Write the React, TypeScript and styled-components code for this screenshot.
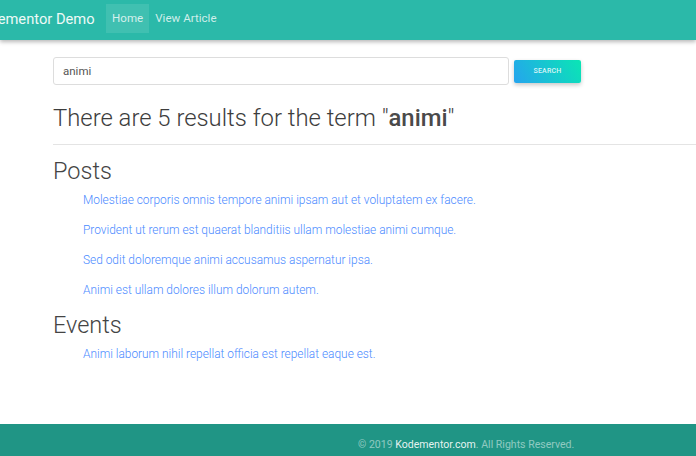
import React from "react";
import styled, { createGlobalStyle } from "styled-components";

const Global = createGlobalStyle`
  html, body { margin: 0; padding: 0; background: #fff; overflow: hidden; }
  body { font-family: Roboto, "Liberation Sans", sans-serif; font-weight: 300; color: #3c3c3c; }
`;
const Page = styled.div`
  width: 696px; height: 456px; display: flex; flex-direction: column; overflow: hidden;
`;
const Navbar = styled.nav`
  height: 40px; flex: none; display: flex; align-items: center; background: #2bb9a9;
  box-shadow: 0 2px 4px rgba(0,0,0,.28); position: relative; z-index: 1; white-space: nowrap;
`;
const Brand = styled.a`
  margin-left: -28px; width: 134px; flex: none; font-size: 14.7px; font-weight: 400; color: #eef9f7; margin-top: -2px;
`;
const NavLink = styled.a<{ $active?: boolean }>`
  height: 29px; margin-top: -4px; padding: 0 6px; display: flex; align-items: center; font-size: 11.6px; font-weight: 400;
  color: rgba(255,255,255,.78);
  background: ${(p) => (p.$active ? "rgba(255,255,255,.1)" : "transparent")};
`;
const Main = styled.main`
  flex: 1; padding: 17px 0 0 53px; display: flex; flex-direction: column; min-height: 0;
`;
const SearchForm = styled.form`
  display: flex; align-items: center; gap: 5px;
`;
const SearchInput = styled.input`
  width: 456px; height: 28px; box-sizing: border-box; padding: 0 9px; border: 1px solid #ddd; border-radius: 3px;
  font: 400 11.5px Roboto, sans-serif; color: #555; outline: none; background: #fff;
`;
const SearchButton = styled.button`
  width: 67px; height: 23px; border: 0; border-radius: 2px; padding: 0; color: rgba(255,255,255,.85);
  font: 500 7px Roboto, sans-serif; letter-spacing: .2px;
  background: linear-gradient(60deg, #25a4ee, #0ae6b4); box-shadow: 0 2px 4px rgba(0,0,0,.22);
`;
const Title = styled.h1`
  margin: 18px 0 0; font-size: 23.85px; line-height: 30px; font-weight: 300; color: #3d3d3d;
  strong { font-weight: 500; color: #4a4a4a; }
`;
const Divider = styled.hr`
  margin: 11px 0 0; border: 0; border-top: 1px solid #e4e4e4;
`;
const SectionTitle = styled.h2<{ $gap: number }>`
  margin: ${(p) => p.$gap}px 0 0; font-size: 23.5px; line-height: 28px; font-weight: 300; color: #444;
`;
const ResultList = styled.ul`
  list-style: none; margin: 7px 0 0; padding: 0 0 0 30px; display: flex; flex-direction: column; gap: 14px;
`;
const ResultLink = styled.a`
  display: block; font-size: 11.9px; line-height: 16px; font-weight: 300; color: #4a8aff; white-space: nowrap;
`;
const Footer = styled.footer`
  height: 32px; box-sizing: border-box; flex: none; background: #209585; display: flex; align-items: center; padding: 8px 0 0 358px;
  font-size: 10.55px; font-weight: 400; color: rgba(255,255,255,.5);
  strong { font-weight: 400; color: rgba(255,255,255,.9); }
`;

const posts = [
  "Molestiae corporis omnis tempore animi ipsam aut et voluptatem ex facere.",
  "Provident ut rerum est quaerat blanditiis ullam molestiae animi cumque.",
  "Sed odit doloremque animi accusamus aspernatur ipsa.",
  "Animi est ullam dolores illum dolorum autem.",
];
const events = ["Animi laborum nihil repellat officia est repellat eaque est."];

export default function App() {
  return (
    <Page>
      <Global />
      <Navbar>
        <Brand>Kodementor Demo</Brand>
        <NavLink $active>Home</NavLink>
        <NavLink>View Article</NavLink>
      </Navbar>
      <Main>
        <SearchForm onSubmit={(e) => e.preventDefault()}>
          <SearchInput defaultValue="animi" />
          <SearchButton>SEARCH</SearchButton>
        </SearchForm>
        <Title>There are 5 results for the term "<strong>animi</strong>"</Title>
        <Divider />
        <SectionTitle $gap={12}>Posts</SectionTitle>
        <ResultList>
          {posts.map((t) => <li key={t}><ResultLink>{t}</ResultLink></li>)}
        </ResultList>
        <SectionTitle $gap={13}>Events</SectionTitle>
        <ResultList>
          {events.map((t) => <li key={t}><ResultLink>{t}</ResultLink></li>)}
        </ResultList>
      </Main>
      <Footer><span>© 2019 <strong>Kodementor.com</strong>. All Rights Reserved.</span></Footer>
    </Page>
  );
}
